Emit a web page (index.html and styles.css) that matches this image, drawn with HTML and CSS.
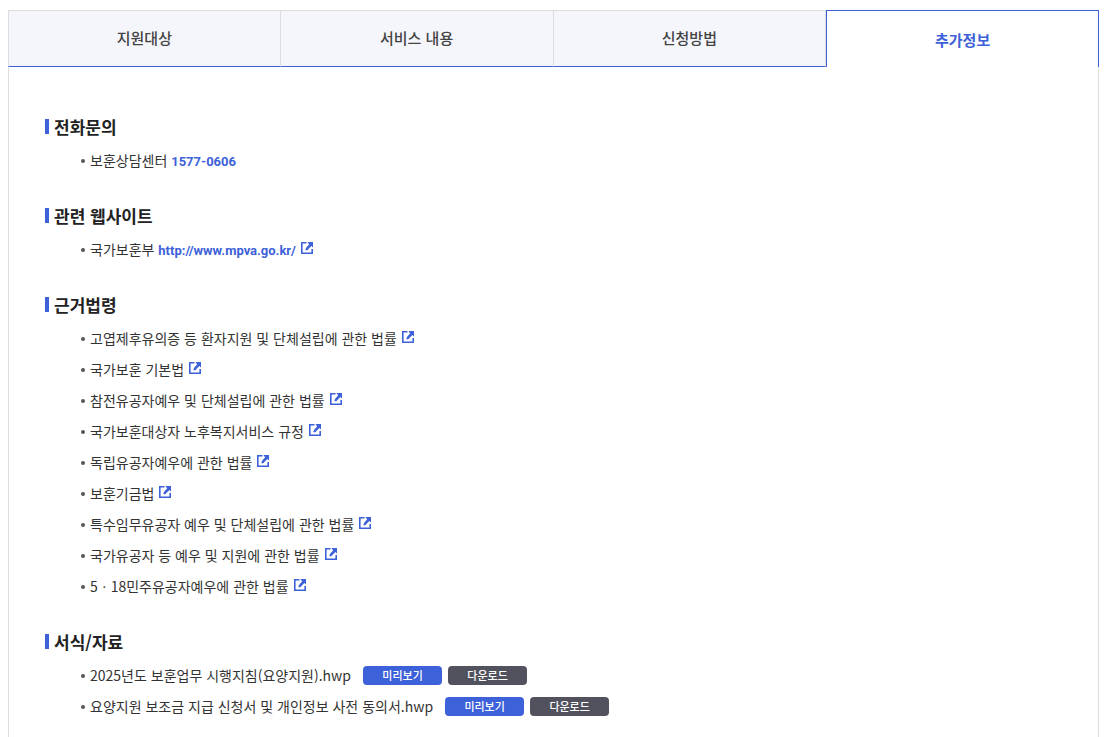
FILE: index.html
```
<!DOCTYPE html>
<html lang="ko">
<head>
<meta charset="utf-8">
<meta name="viewport" content="width=device-width, initial-scale=1">
<title>추가정보</title>
<link rel="stylesheet" href="styles.css">
</head>
<body>
<svg class="sprite" aria-hidden="true">
  <symbol id="ext" viewBox="0 0 12 12">
    <path d="M5.500.8H.8v10.400h10.400V7" fill="none" stroke="currentColor" stroke-width="1.6"/>
    <path d="M6.500 0H12v5.500l-1.600-1.600-2 2c-1 .9-1.600 1.400-2 2.300H4.400c.2-1.700.9-2.700 1.800-3.700l1.900-1.900z" fill="currentColor"/>
  </symbol>
</svg>
<div class="tabs" role="tablist">
  <button class="tab" type="button" role="tab">지원대상</button>
  <button class="tab" type="button" role="tab">서비스 내용</button>
  <button class="tab" type="button" role="tab">신청방법</button>
  <button class="tab active" type="button" role="tab" aria-selected="true">추가정보</button>
</div>
<main class="panel">
  <section class="group">
    <h2 class="title">전화문의</h2>
    <ul class="list">
      <li class="item">보훈상담센터 <a class="strong" href="tel:1577-0606">1577-0606</a></li>
    </ul>
  </section>
  <section class="group">
    <h2 class="title">관련 웹사이트</h2>
    <ul class="list">
      <li class="item">국가보훈부 <a class="strong" href="http://www.mpva.go.kr/">http://www.mpva.go.kr/<svg class="ext"><use href="#ext"/></svg></a></li>
    </ul>
  </section>
  <section class="group">
    <h2 class="title">근거법령</h2>
    <ul class="list">
      <li class="item"><a class="law" href="#">고엽제후유의증 등 환자지원 및 단체설립에 관한 법률<svg class="ext"><use href="#ext"/></svg></a></li>
      <li class="item"><a class="law" href="#">국가보훈 기본법<svg class="ext"><use href="#ext"/></svg></a></li>
      <li class="item"><a class="law" href="#">참전유공자예우 및 단체설립에 관한 법률<svg class="ext"><use href="#ext"/></svg></a></li>
      <li class="item"><a class="law" href="#">국가보훈대상자 노후복지서비스 규정<svg class="ext"><use href="#ext"/></svg></a></li>
      <li class="item"><a class="law" href="#">독립유공자예우에 관한 법률<svg class="ext"><use href="#ext"/></svg></a></li>
      <li class="item"><a class="law" href="#">보훈기금법<svg class="ext"><use href="#ext"/></svg></a></li>
      <li class="item"><a class="law" href="#">특수임무유공자 예우 및 단체설립에 관한 법률<svg class="ext"><use href="#ext"/></svg></a></li>
      <li class="item"><a class="law" href="#">국가유공자 등 예우 및 지원에 관한 법률<svg class="ext"><use href="#ext"/></svg></a></li>
      <li class="item"><a class="law" href="#">5ㆍ18민주유공자예우에 관한 법률<svg class="ext"><use href="#ext"/></svg></a></li>
    </ul>
  </section>
  <section class="group">
    <h2 class="title">서식/자료</h2>
    <ul class="list">
      <li class="item file"><span>2025년도 보훈업무 시행지침(요양지원).hwp</span><span class="actions"><button class="btn" type="button">미리보기</button><button class="btn dark" type="button">다운로드</button></span></li>
      <li class="item file"><span>요양지원 보조금 지급 신청서 및 개인정보 사전 동의서.hwp</span><span class="actions"><button class="btn" type="button">미리보기</button><button class="btn dark" type="button">다운로드</button></span></li>
    </ul>
  </section>
</main>
</body>
</html>
```
FILE: styles.css
```
* { box-sizing: border-box; }

body {
  margin: 10px 7px 0 8px;
  background: #fff;
  color: #333;
  font: 14px/31px "Noto Sans CJK KR", sans-serif;
}

.sprite { display: none; }

button { font-family: inherit; cursor: pointer; }

.tabs {
  display: grid;
  grid-template-columns: repeat(4, 1fr);
}

.tab {
  height: 57px;
  padding: 0 0 2px;
  border: 1px solid #ddd;
  border-left-width: 0;
  border-bottom-color: #3d61d8;
  background: #f5f6fb;
  color: #444;
  font-size: 15px;
  font-weight: 500;
}

.tab:first-child { border-left-width: 1px; }

.tab.active {
  padding: 0;
  border: 1px solid #3d61d8;
  border-bottom: 0;
  background: #fff;
  color: #3d61d8;
  font-weight: 700;
}

.panel {
  padding: 45px 36px 16px;
  border: solid #ddd;
  border-width: 0 1px;
}

.group { margin-bottom: 25px; }
.group:last-child { margin-bottom: 0; }

.title {
  display: flex;
  align-items: center;
  gap: 5px;
  margin: 0 0 3px;
  color: #222;
  font-size: 17px;
  font-weight: 700;
  line-height: 30px;
}

.title::before {
  content: "";
  width: 4px;
  height: 15px;
  margin-bottom: 2px;
  background: #3d61d8;
}

.list {
  margin: 0;
  padding: 0 0 0 36px;
  list-style: none;
}

.item::before {
  content: "";
  display: inline-block;
  width: 4px;
  height: 4px;
  margin-right: 5px;
  border-radius: 50%;
  background: #555;
  vertical-align: 3px;
}

a { text-decoration: none; }

.law { color: inherit; }

.strong {
  color: #3d61d8;
  font-family: Roboto, sans-serif;
  font-size: 13px;
  font-weight: 700;
  line-height: 1;
}

.ext {
  width: 12px;
  height: 12px;
  margin-left: 5px;
  color: #3d61d8;
  vertical-align: 1px;
}

.file {
  display: flex;
  align-items: center;
}

.actions {
  display: flex;
  gap: 6px;
  margin-left: 12px;
}

.btn {
  width: 79px;
  height: 19px;
  padding: 0;
  border: 0;
  border-radius: 4px;
  background: #3d61d8;
  color: #fff;
  font-size: 11px;
  font-weight: 500;
  line-height: 19px;
}

.btn.dark { background: #52515e; }
```
